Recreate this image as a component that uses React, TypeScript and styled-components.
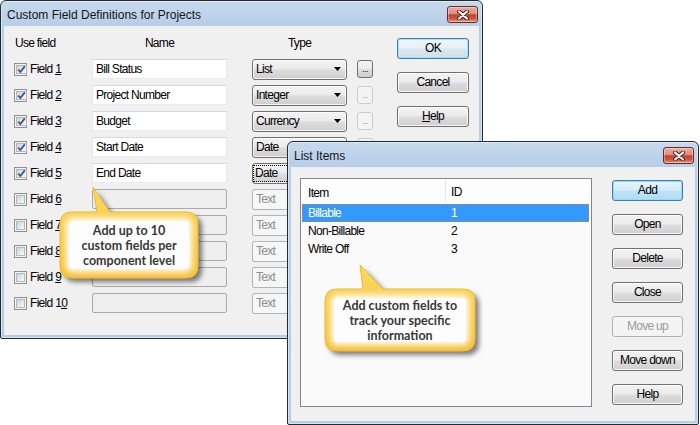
import React from "react";
import styled, { createGlobalStyle, css } from "styled-components";

const UI = `"Liberation Sans", Arial, sans-serif`;
const TITLE = `"Liberation Sans", Arial, sans-serif`;
const CALLOUT = `Lato, "Open Sans", sans-serif`;

const GlobalStyle = createGlobalStyle`
  html, body { margin: 0; padding: 0; background: #ffffff; }
  body { font-family: ${UI}; font-size: 12px; letter-spacing: -0.7px; color: #000; }
`;

const Desktop = styled.div`
  position: relative;
  width: 700px;
  height: 425px;
  overflow: hidden;
  background: #ffffff;
`;

type WinProps = { $x: number; $y: number; $w: number; $h: number; $z: number };

const Win = styled.section<WinProps>`
  position: absolute;
  left: ${(p) => p.$x}px;
  top: ${(p) => p.$y}px;
  width: ${(p) => p.$w}px;
  height: ${(p) => p.$h}px;
  z-index: ${(p) => p.$z};
  box-sizing: border-box;
  border: 1px solid #24292f;
  border-radius: 6px 6px 2px 2px;
  background: linear-gradient(to bottom, #c6d9ee 0px, #b7cee8 25px, #b4cce7 100%);
  box-shadow: inset 0 0 0 1px rgba(255, 255, 255, 0.45);
  display: flex;
  flex-direction: column;
`;

const TitleBar = styled.header`
  flex: none;
  height: 25px;
  display: flex;
  align-items: flex-start;
  justify-content: space-between;
  padding: 0 4px 0 6px;
`;

const TitleText = styled.span`
  font-family: ${TITLE};
  font-size: 12px;
  letter-spacing: 0;
  color: #141414;
  line-height: 14px;
  margin-top: 7px;
`;

const CloseButton = styled.div`
  box-sizing: border-box;
  width: 31px;
  height: 17px;
  margin-top: 5px;
  border: 1px solid #6b2a22;
  border-radius: 3px;
  background: linear-gradient(
    to bottom,
    #eab0a4 0%,
    #dc8c7e 45%,
    #c4422f 52%,
    #cc5640 78%,
    #e0a088 100%
  );
  box-shadow: inset 0 0 0 1px rgba(255, 255, 255, 0.35);
  display: flex;
  align-items: center;
  justify-content: center;
`;

const Client = styled.div`
  flex: 1;
  margin: 0 3px 3px;
  background: #f0f0f0;
  display: flex;
  min-height: 0;
`;

const MainClient = styled(Client)`
  padding: 4px 0 0 10px;
`;

const ListClient = styled(Client)`
  padding: 11px 0 0 9px;
`;

const FieldGrid = styled.div`
  display: grid;
  grid-template-columns: 78px 160px 105px 16px;
  grid-auto-rows: 26px;
  align-items: center;
`;

const HeadCell = styled.div<{ $w?: number }>`
  width: ${(p) => (p.$w ? `${p.$w}px` : "auto")};
  text-align: ${(p) => (p.$w ? "center" : "left")};
  padding-left: ${(p) => (p.$w ? 0 : 1)}px;
  margin-top: -1px;
`;

const UseCell = styled.div`
  display: flex;
  align-items: center;
  gap: 3px;
`;

const CheckOuter = styled.span`
  box-sizing: border-box;
  width: 13px;
  height: 13px;
  border: 1px solid #8e8f8f;
  background: #f4f4f4;
  padding: 1px;
  display: flex;
`;

const CheckInner = styled.span`
  flex: 1;
  border: 1px solid #b3b8bd;
  background: linear-gradient(135deg, #cdd1d6 0%, #e6e8ea 55%, #f8f8f8 100%);
  display: flex;
  align-items: center;
  justify-content: center;
`;

const FieldLabel = styled.span`
  line-height: 14px;
`;

const Accel = styled.span`
  text-decoration: underline;
  text-underline-offset: 1px;
`;

const TextBox = styled.div<{ $disabled?: boolean }>`
  box-sizing: border-box;
  width: 135px;
  height: 20px;
  padding: 0 3px;
  line-height: 18px;
  border: 1px solid;
  border-color: #d5d8de #e4e7ec #e8ecf0 #e4e7ec;
  background: #ffffff;
  white-space: nowrap;
  ${(p) =>
    p.$disabled &&
    css`
      border-color: #aaaaaa;
      border-radius: 2px;
      background: #efefef;
    `}
`;

const Combo = styled.div<{ $disabled?: boolean }>`
  box-sizing: border-box;
  width: 95px;
  height: 21px;
  border: 1px solid #707070;
  border-radius: 3px;
  padding: 0 5px 0 3px;
  display: flex;
  align-items: center;
  gap: 4px;
  background: linear-gradient(to bottom, #f3f3f3 0%, #ebebeb 48%, #dcdcdc 52%, #cfcfcf 100%);
  box-shadow: inset 0 0 0 1px rgba(255, 255, 255, 0.75);
  ${(p) =>
    p.$disabled &&
    css`
      border-color: #b1b5b8;
      border-radius: 2px;
      background: #f6f6f6;
      color: #8d8d8d;
      box-shadow: none;
    `}
`;

const ComboText = styled.span<{ $focus?: boolean }>`
  flex: 1;
  line-height: 15px;
  margin-left: ${(p) => (p.$focus ? -2 : 0)}px;
  padding-left: ${(p) => (p.$focus ? 1 : 0)}px;
  outline: ${(p) => (p.$focus ? "1px dotted #000" : "none")};
`;

const Ellipsis = styled.div<{ $disabled?: boolean }>`
  box-sizing: border-box;
  width: 16px;
  height: 18px;
  border: 1px solid #707070;
  border-radius: 3px;
  background: linear-gradient(to bottom, #f3f3f3 0%, #ebebeb 48%, #dcdcdc 52%, #cfcfcf 100%);
  font-size: 9px;
  line-height: 9px;
  display: flex;
  align-items: flex-end;
  justify-content: center;
  padding-bottom: 3px;
  letter-spacing: -0.5px;
  ${(p) =>
    p.$disabled &&
    css`
      border-color: #cacccf;
      background: #f4f4f4;
      color: #9a9a9a;
    `}
`;

const ButtonColumn = styled.div<{ $ml: number; $mt: number }>`
  display: flex;
  flex-direction: column;
  gap: 13px;
  margin-left: ${(p) => p.$ml}px;
  margin-top: ${(p) => p.$mt}px;
`;

type BtnVariant = "normal" | "default" | "defaultLight" | "disabled";

const Button = styled.div<{ $variant?: BtnVariant; $w: number }>`
  box-sizing: border-box;
  width: ${(p) => p.$w}px;
  height: 21px;
  border: 1px solid #707070;
  border-radius: 3px;
  display: flex;
  align-items: center;
  justify-content: center;
  padding-bottom: 1px;
  background: linear-gradient(to bottom, #f2f2f2 0%, #ebebeb 48%, #dddddd 52%, #cfcfcf 100%);
  box-shadow: inset 0 0 0 1px rgba(255, 255, 255, 0.8);
  ${(p) =>
    p.$variant === "default" &&
    css`
      border-color: #3c7fb1;
      background: linear-gradient(to bottom, #e5f4fc 0%, #d4ecfa 48%, #bfe3f8 52%, #b0dbf4 100%);
      box-shadow: inset 0 0 0 1px #9bd8f5;
    `}
  ${(p) =>
    p.$variant === "defaultLight" &&
    css`
      border-color: #3c7fb1;
      background: linear-gradient(to bottom, #f0f6fa 0%, #e9f1f6 48%, #dbe6ee 52%, #d2dfe8 100%);
      box-shadow: inset 0 0 0 1px #a9e0f8;
    `}
  ${(p) =>
    p.$variant === "disabled" &&
    css`
      border-color: #adb2b5;
      background: #f4f4f4;
      color: #9c9c9c;
      box-shadow: none;
    `}
`;

const ListView = styled.div`
  box-sizing: border-box;
  width: 292px;
  height: 229px;
  border: 1px solid #828790;
  background: #fafafa;
  display: flex;
  flex-direction: column;
`;

const ListHeader = styled.div`
  height: 25px;
  display: grid;
  grid-template-columns: 144px 1fr;
  background: linear-gradient(to bottom, #ffffff 0%, #fbfbfb 100%);
`;

const HeaderCell = styled.div<{ $divider?: boolean }>`
  display: flex;
  align-items: center;
  padding-left: ${(p) => (p.$divider ? 5 : 7)}px;
  padding-top: 2px;
  border-left: ${(p) => (p.$divider ? "1px solid #e3e4e6" : "none")};
  margin: ${(p) => (p.$divider ? "1px 0 2px" : "0")};
`;

const ListRow = styled.div<{ $selected?: boolean }>`
  height: 18px;
  margin: 0 2px 0 1px;
  display: grid;
  grid-template-columns: 143px 1fr;
  align-items: center;
  ${(p) =>
    p.$selected &&
    css`
      background: #3399ff;
      color: #ffffff;
      outline: 1px dotted #c9803f;
      outline-offset: -1px;
    `}
`;

const RowCell = styled.span<{ $pl: number }>`
  padding-left: ${(p) => p.$pl}px;
`;

type CalloutProps = {
  id: string;
  left: number;
  top: number;
  width: number;
  height: number;
  bx: number;
  by: number;
  bw: number;
  bh: number;
  tip: [number, number];
  base: [number, number];
  lines: string[];
};

const CalloutWrap = styled.div`
  position: absolute;
  z-index: 10;
`;

const CalloutSvg = styled.svg`
  position: absolute;
  left: 0;
  top: 0;
  overflow: visible;
`;

const CalloutText = styled.div`
  position: absolute;
  display: flex;
  flex-direction: column;
  align-items: center;
  justify-content: center;
  font-family: ${CALLOUT};
  font-weight: 700;
  font-size: 12.5px;
  letter-spacing: 0;
  line-height: 15px;
  color: #383838;
  text-align: center;
  white-space: nowrap;
`;

function calloutPath(bx: number, by: number, bw: number, bh: number, tip: [number, number], base: [number, number]) {
  const r = 12;
  const R = bx + bw;
  const B = by + bh;
  return [
    `M${bx + r},${by}`,
    `L${base[0]},${by}`,
    `L${tip[0]},${tip[1]}`,
    `L${base[1]},${by}`,
    `L${R - r},${by}`,
    `Q${R},${by} ${R},${by + r}`,
    `L${R},${B - r}`,
    `Q${R},${B} ${R - r},${B}`,
    `L${bx + r},${B}`,
    `Q${bx},${B} ${bx},${B - r}`,
    `L${bx},${by + r}`,
    `Q${bx},${by} ${bx + r},${by}`,
    "Z",
  ].join(" ");
}

function Callout(p: CalloutProps) {
  const d = calloutPath(p.bx, p.by, p.bw, p.bh, p.tip, p.base);
  return (
    <CalloutWrap style={{ left: p.left, top: p.top, width: p.width, height: p.height }}>
      <CalloutSvg width={p.width} height={p.height} viewBox={`0 0 ${p.width} ${p.height}`}>
        <defs>
          <filter id={`${p.id}-sh`} x="-20%" y="-20%" width="140%" height="140%">
            <feGaussianBlur stdDeviation="2.6" />
          </filter>
          <filter id={`${p.id}-gl`} x="-20%" y="-20%" width="140%" height="140%">
            <feGaussianBlur stdDeviation="3.2" />
          </filter>
          <linearGradient id={`${p.id}-fill`} x1="0" y1="0" x2="0" y2="1">
            <stop offset="0" stopColor="#fbd862" />
            <stop offset="1" stopColor="#f5c038" />
          </linearGradient>
        </defs>
        <path d={d} fill="rgba(0,0,0,0.5)" transform="translate(4 4)" filter={`url(#${p.id}-sh)`} />
        <path d={d} fill={`url(#${p.id}-fill)`} stroke="#f0b92e" strokeWidth="1" />
        <rect
          x={p.bx + 6}
          y={p.by + 6}
          width={p.bw - 12}
          height={p.bh - 12}
          rx="6"
          fill="#fffefa"
          filter={`url(#${p.id}-gl)`}
        />
        <rect x={p.bx + 9} y={p.by + 9} width={p.bw - 18} height={p.bh - 18} rx="4" fill="#fdfdfd" />
      </CalloutSvg>
      <CalloutText style={{ left: p.bx, top: p.by, width: p.bw, height: p.bh }}>
        {p.lines.map((l) => (
          <span key={l}>{l}</span>
        ))}
      </CalloutText>
    </CalloutWrap>
  );
}

function CloseGlyph() {
  return (
    <svg width="14" height="10" viewBox="0 0 14 10">
      <path d="M3 1.5 L11 8.5 M11 1.5 L3 8.5" stroke="#4d1d18" strokeWidth="4" strokeLinecap="round" fill="none" />
      <path d="M3 1.5 L11 8.5 M11 1.5 L3 8.5" stroke="#ffffff" strokeWidth="2.2" strokeLinecap="round" fill="none" />
    </svg>
  );
}

function CheckBox({ checked }: { checked: boolean }) {
  return (
    <CheckOuter>
      <CheckInner>
        {checked && (
          <svg width="9" height="9" viewBox="0 0 9 9">
            <path d="M1.3 4.6 L3.4 7 L7.8 1.4" stroke="#3a4f86" strokeWidth="1.7" fill="none" />
          </svg>
        )}
      </CheckInner>
    </CheckOuter>
  );
}

function ComboArrow({ color }: { color: string }) {
  return (
    <svg width="7" height="4" viewBox="0 0 7 4">
      <path d="M0 0 L7 0 L3.5 4 Z" fill={color} />
    </svg>
  );
}

type FieldRow = { n: number; on: boolean; name: string; type: string; more?: boolean; focus?: boolean; ellipsis?: boolean };

const rows: FieldRow[] = [
  { n: 1, on: true, name: "Bill Status", type: "List", more: true, ellipsis: true },
  { n: 2, on: true, name: "Project Number", type: "Integer", ellipsis: true },
  { n: 3, on: true, name: "Budget", type: "Currency", ellipsis: true },
  { n: 4, on: true, name: "Start Date", type: "Date", ellipsis: true },
  { n: 5, on: true, name: "End Date", type: "Date", focus: true },
  { n: 6, on: false, name: "", type: "Text" },
  { n: 7, on: false, name: "", type: "Text" },
  { n: 8, on: false, name: "", type: "Text" },
  { n: 9, on: false, name: "", type: "Text" },
  { n: 10, on: false, name: "", type: "Text" },
];

const listItems = [
  { item: "Billable", id: "1", selected: true },
  { item: "Non-Billable", id: "2" },
  { item: "Write Off", id: "3" },
];

function FieldNumber({ n }: { n: number }) {
  const s = String(n);
  return (
    <>
      Field {s.slice(0, -1)}
      <Accel>{s.slice(-1)}</Accel>
    </>
  );
}

export default function App() {
  return (
    <Desktop>
      <GlobalStyle />
      <Win $x={0} $y={0} $w={483} $h={339} $z={1}>
        <TitleBar>
          <TitleText>Custom Field Definitions for Projects</TitleText>
          <CloseButton>
            <CloseGlyph />
          </CloseButton>
        </TitleBar>
        <MainClient>
          <FieldGrid>
            <HeadCell>Use field</HeadCell>
            <HeadCell $w={135}>Name</HeadCell>
            <HeadCell $w={95}>Type</HeadCell>
            <span />
            {rows.map((r) => (
              <React.Fragment key={r.n}>
                <UseCell>
                  <CheckBox checked={r.on} />
                  <FieldLabel>
                    <FieldNumber n={r.n} />
                  </FieldLabel>
                </UseCell>
                <TextBox $disabled={!r.on}>{r.name}</TextBox>
                <Combo $disabled={!r.on}>
                  <ComboText $focus={r.focus}>{r.type}</ComboText>
                  <ComboArrow color={r.on ? "#000" : "#a0a0a0"} />
                </Combo>
                {r.ellipsis ? <Ellipsis $disabled={!r.more}>...</Ellipsis> : <span />}
              </React.Fragment>
            ))}
          </FieldGrid>
          <ButtonColumn $ml={24} $mt={8}>
            <Button $w={72} $variant="defaultLight">OK</Button>
            <Button $w={72}>Cancel</Button>
            <Button $w={72}>
              <Accel>H</Accel>elp
            </Button>
          </ButtonColumn>
        </MainClient>
      </Win>

      <Win $x={287} $y={141} $w={412} $h={284} $z={2}>
        <TitleBar>
          <TitleText>List Items</TitleText>
          <CloseButton>
            <CloseGlyph />
          </CloseButton>
        </TitleBar>
        <ListClient>
          <ListView>
            <ListHeader>
              <HeaderCell>Item</HeaderCell>
              <HeaderCell $divider>ID</HeaderCell>
            </ListHeader>
            {listItems.map((it) => (
              <ListRow key={it.id} $selected={it.selected}>
                <RowCell $pl={6}>{it.item}</RowCell>
                <RowCell $pl={6}>{it.id}</RowCell>
              </ListRow>
            ))}
          </ListView>
          <ButtonColumn $ml={20} $mt={2}>
            <Button $w={71} $variant="default">Add</Button>
            <Button $w={71}>Open</Button>
            <Button $w={71}>Delete</Button>
            <Button $w={71}>Close</Button>
            <Button $w={71} $variant="disabled">Move up</Button>
            <Button $w={71}>Move down</Button>
            <Button $w={71}>Help</Button>
          </ButtonColumn>
        </ListClient>
      </Win>

      <Callout
        id="c1"
        left={50}
        top={180}
        width={165}
        height={110}
        bx={10}
        by={32}
        bw={138}
        bh={66}
        tip={[43, 7]}
        base={[47, 60]}
        lines={["Add up to 10", "custom fields per", "component level"]}
      />
      <Callout
        id="c2"
        left={315}
        top={258}
        width={175}
        height={105}
        bx={10}
        by={31}
        bw={150}
        bh={62}
        tip={[45, 7]}
        base={[48, 68]}
        lines={["Add custom fields to", "track your specific", "information"]}
      />
    </Desktop>
  );
}
